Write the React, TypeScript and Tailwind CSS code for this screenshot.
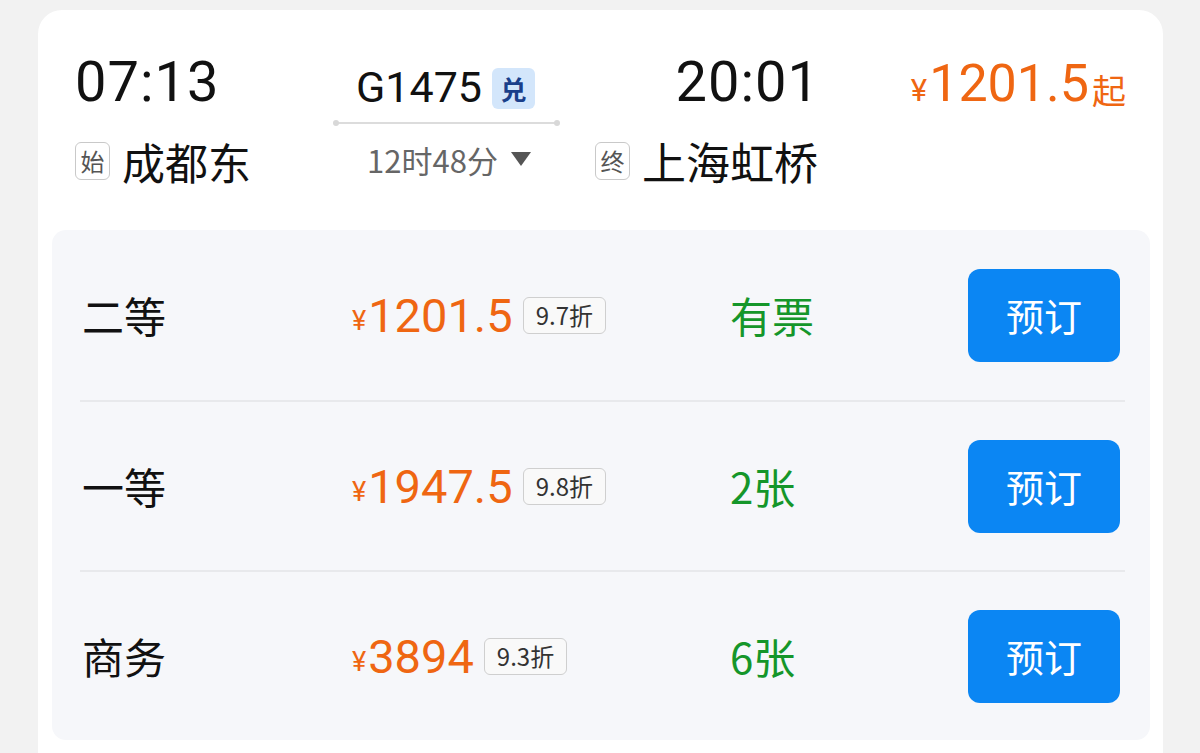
import React from "react";

const num = { fontFamily: "Roboto, 'Noto Sans CJK SC', sans-serif" };
const cjk = { fontFamily: "'Noto Sans CJK SC', 'Noto Sans', sans-serif" };

function Tag({ ch }: { ch: string }) {
  return (
    <span
      className="inline-flex items-center justify-center w-[35px] h-[38px] border-[1.5px] border-[#c9c9c9] rounded-[6px] text-[24px] text-[#555] leading-none mr-[12px]"
      style={cjk}
    >
      {ch}
    </span>
  );
}

const rows = [
  { name: "二等", price: "1201.5", disc: "9.7折", status: "有票" },
  { name: "一等", price: "1947.5", disc: "9.8折", status: "2张" },
  { name: "商务", price: "3894", disc: "9.3折", status: "6张" },
];

export default function App() {
  return (
    <div className="w-[1200px] h-[753px] overflow-hidden bg-[#f2f2f2] pt-[10px] pl-[38px] pr-[37px]">
      <div className="bg-white rounded-[24px] h-[800px] pl-[14px] pr-[13px]">
        {/* header */}
        <div className="flex h-[220px] pt-[44px] pl-[23px] text-[#111]">
          {/* col 1 */}
          <div className="w-[260px] flex flex-col">
            <div className="h-[56px] flex items-center text-[56px] leading-none tracking-[1px]" style={num}>
              07:13
            </div>
            <div className="mt-[29px] h-[44px] flex items-center">
              <Tag ch="始" />
              <span className="text-[43px] leading-none" style={cjk}>成都东</span>
            </div>
          </div>
          {/* col 2 */}
          <div className="w-[223px] flex flex-col">
            <div className="h-[56px] flex items-end justify-center pr-[2px]">
              <span className="text-[43px] leading-none mb-[1px]" style={num}>G1475</span>
              <span
                className="ml-[10px] w-[43px] h-[41px] rounded-[6px] bg-[#d3e6fb] text-[#1a3f8a] text-[26px] font-bold flex items-center justify-center leading-none mb-[1px]"
                style={cjk}
              >
                兑
              </span>
            </div>
            <div className="mt-[12px] h-[2px] relative bg-[#dcdcdc]">
              <span className="absolute left-[-2px] top-[-2px] w-[6px] h-[6px] rounded-full bg-[#d8d8d8]" />
              <span className="absolute right-[-2px] top-[-2px] w-[6px] h-[6px] rounded-full bg-[#d8d8d8]" />
            </div>
            <div className="mt-[15px] h-[40px] flex items-center justify-center pl-[6px]">
              <span className="text-[31px] leading-none text-[#666]" style={cjk}>12时48分</span>
              <svg width="22" height="16" viewBox="0 0 22 16" className="ml-[12px]">
                <path d="M1 1 H21 L11 15 Z" fill="#555" />
              </svg>
            </div>
          </div>
          {/* col 3 */}
          <div className="ml-[37px] w-[225px] flex flex-col">
            <div className="h-[56px] flex items-center justify-end text-[56px] leading-none tracking-[1px]" style={num}>
              20:01
            </div>
            <div className="mt-[29px] h-[44px] flex items-center">
              <Tag ch="终" />
              <span className="text-[44px] leading-none" style={cjk}>上海虹桥</span>
            </div>
          </div>
          {/* col 4 */}
          <div className="flex-1 flex justify-end pr-[24px]">
            <div className="h-[56px] flex items-end text-[#ef6612]">
              <span className="text-[31px] leading-none mb-[4px]" style={num}>¥</span>
              <span className="text-[52px] leading-none ml-[2px]" style={num}>1201.5</span>
              <span className="text-[34px] leading-none mb-[3px] ml-[3px]" style={cjk}>起</span>
            </div>
          </div>
        </div>

        {/* seats panel */}
        <div className="bg-[#f6f7fa] rounded-[14px] h-[510px] flex flex-col">
          {rows.map((r, i) => (
            <div key={r.name} className="flex flex-col h-[170px]">
              {i > 0 && <div className="ml-[28px] mr-[25px] h-[2px] bg-[#e8e9ec]" />}
              <div className="flex-1 flex items-center pl-[30px] pr-[30px]">
                <div className="w-[270px] text-[42px] leading-none text-[#111]" style={cjk}>
                  {r.name}
                </div>
                <div className="w-[378px] flex items-center">
                  <div className="flex items-end text-[#ef6612]">
                    <span className="text-[27px] leading-none mb-[4px]" style={num}>¥</span>
                    <span className="text-[47px] leading-none ml-[2px]" style={num}>{r.price}</span>
                  </div>
                  <span
                    className="ml-[10px] h-[37px] px-[12px] flex items-center border-[1.5px] border-[#cfcfcf] rounded-[6px] bg-[#f9f9f9] text-[24px] leading-none text-[#333]"
                    style={cjk}
                  >
                    {r.disc}
                  </span>
                </div>
                <div className="flex-1 text-[42px] leading-none text-[#15962a]" style={cjk}>
                  {r.status}
                </div>
                <button
                  className="w-[152px] h-[93px] rounded-[12px] bg-[#0b86f3] text-white text-[38px] leading-none"
                  style={cjk}
                >
                  预订
                </button>
              </div>
            </div>
          ))}
        </div>
      </div>
    </div>
  );
}
